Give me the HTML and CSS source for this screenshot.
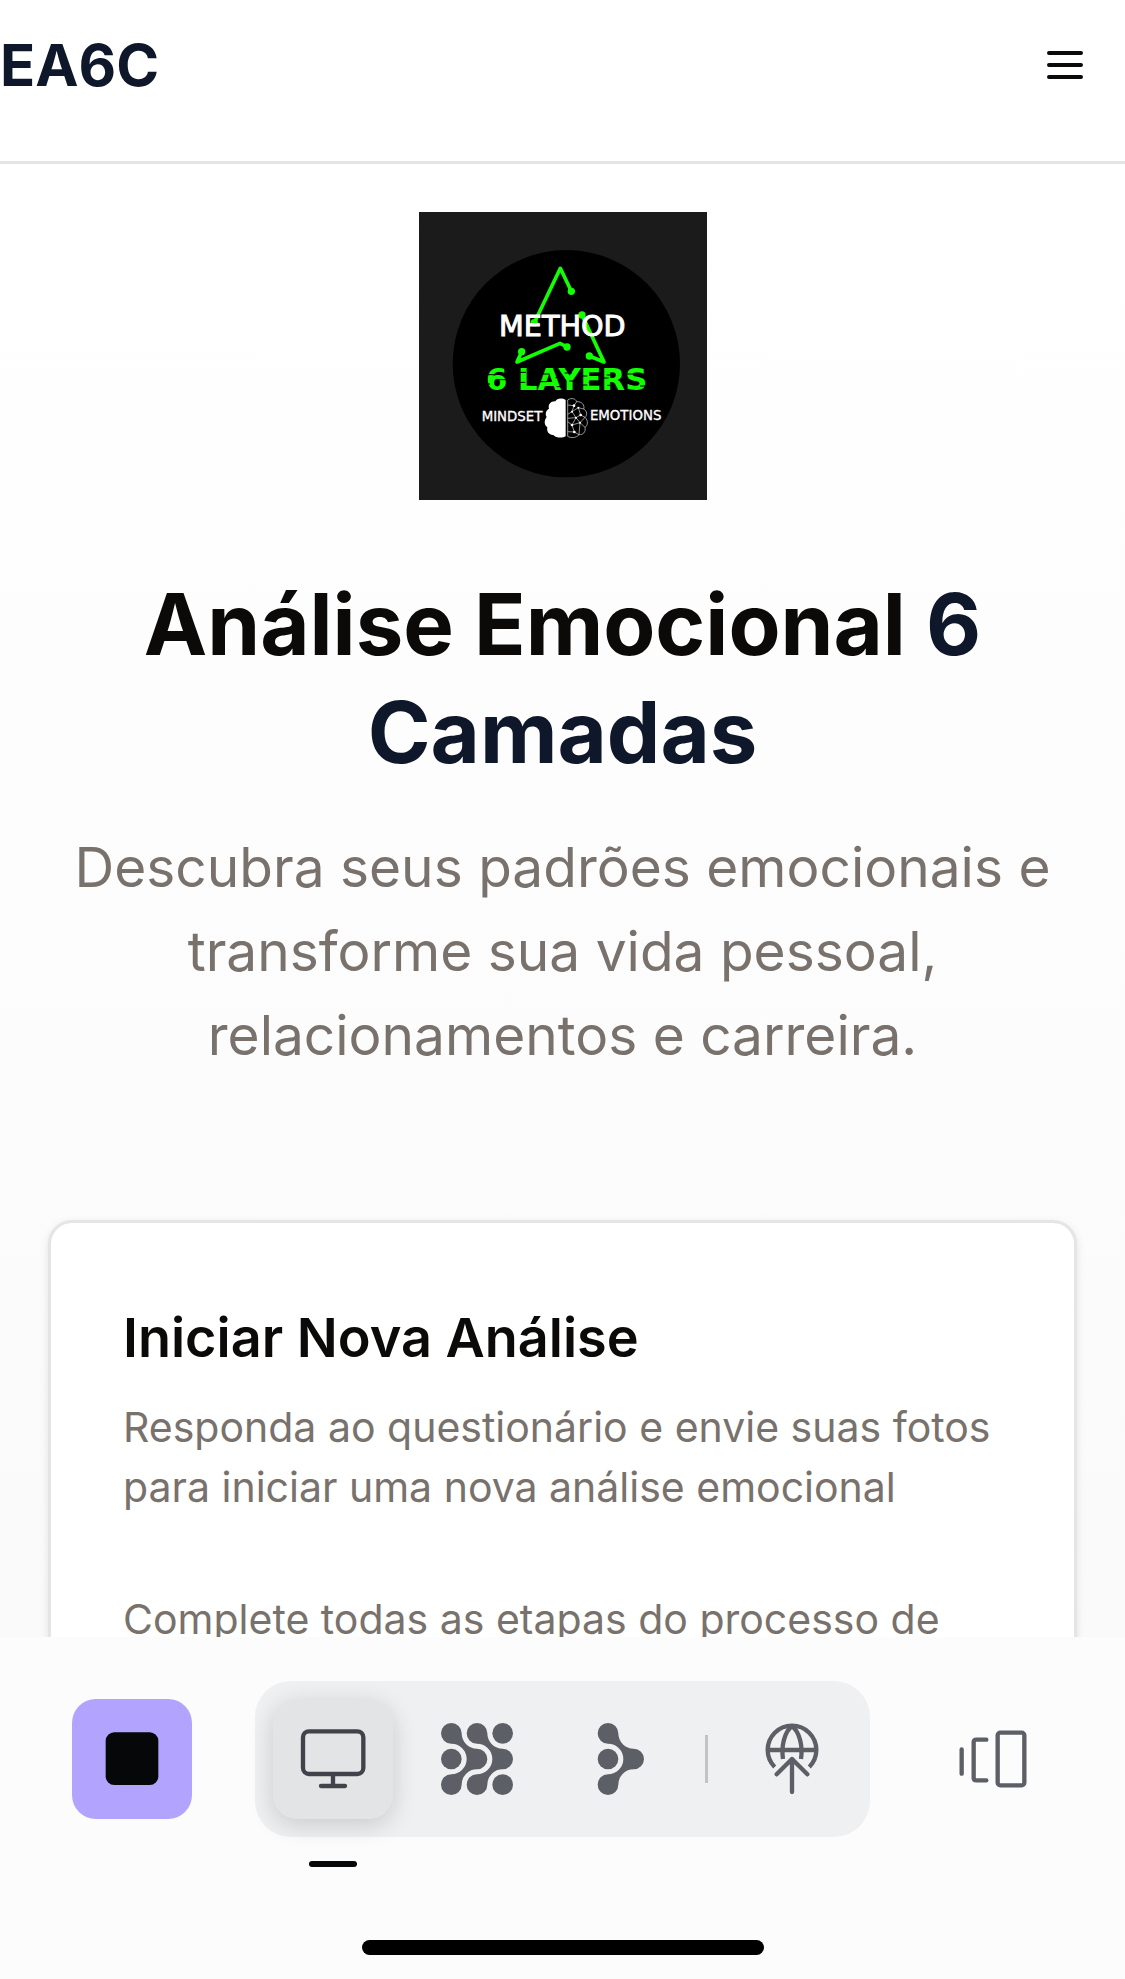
FILE: index.html
```html
<!DOCTYPE html>
<html lang="pt-BR">
<head>
<meta charset="utf-8">
<meta name="viewport" content="width=device-width, initial-scale=1">
<title>EA6C</title>
<link rel="stylesheet" href="styles.css">
</head>
<body>
<div class="page">
  <header class="header">
    <a class="brand" href="#">EA6C</a>
    <button class="menu" type="button" aria-label="Menu">
      <svg viewBox="0 0 24 24" class="menu-icon"><path d="M4 6h16M4 12h16M4 18h16"/></svg>
    </button>
  </header>
  <main class="content">
    <svg class="logo" viewBox="0 0 864 864" role="img" aria-label="Method 6 Layers">
      <rect width="864" height="864" fill="#1b1b1b"/>
      <circle cx="442" cy="455" r="341" fill="#000"/>
      <g transform="translate(-27 -21)">
        <g class="logo-lines">
          <path d="M373 353 451 190 484 259"/>
          <path d="M516 330 582 471 538 453"/>
          <path d="M335 440 321 471 450 415 471 426"/>
        </g>
        <g fill="#1f0">
          <circle cx="373" cy="353" r="11"/><circle cx="484" cy="259" r="11"/>
          <circle cx="516" cy="330" r="11"/><circle cx="538" cy="453" r="11"/>
          <circle cx="335" cy="440" r="11"/><circle cx="471" cy="426" r="11"/>
        </g>
        <text class="logo-method" x="457" y="393">METHOD</text>
        <text class="logo-layers" x="470" y="555">6 LAYERS</text>
        <path class="logo-glitch" d="M228 509h24M264 524h26M226 537h14M330 502h18M352 516h18M328 532h18M362 541h20M392 507h26M436 518h20M388 530h24M440 545h22M464 504h22M510 513h22M478 528h18M512 540h20M540 506h22M566 519h30M536 533h18M590 510h22M628 524h18M592 541h20M650 507h20M694 517h22M648 530h30M690 543h24"/>
        <text class="logo-small" x="306" y="648">MINDSET</text>
        <text class="logo-small" x="647" y="644">EMOTIONS</text>
        <path fill="#fff" d="M467 585C455 577 440 580 436 589 423 588 413 599 417 611 407 616 405 628 410 636 402 646 402 660 412 667 409 680 418 691 430 690 438 699 457 700 467 694Z"/>
        <g class="logo-net">
          <path d="M473 585C484 577 497 581 500 590 515 589 525 600 521 612 532 618 532 631 525 637 536 648 533 662 525 667 528 681 519 690 507 689 499 699 483 700 473 694Z"/>
          <path d="M473 600 492 602 500 590M492 602 486 620 473 628M486 620 505 608 521 612M505 608 512 630 525 637M486 620 498 638 512 630M498 638 486 660 473 650M498 638 510 653 525 667M486 660 510 653 507 689M486 660 493 681 507 689M493 681 473 680M473 640 498 638M510 653 525 637"/>
        </g>
        <g fill="#fff">
          <circle cx="492" cy="602" r="4"/><circle cx="486" cy="620" r="3"/><circle cx="505" cy="608" r="3"/><circle cx="512" cy="630" r="4"/><circle cx="498" cy="638" r="3"/><circle cx="486" cy="660" r="4"/><circle cx="510" cy="653" r="3"/><circle cx="493" cy="681" r="4"/>
        </g>
      </g>
    </svg>
    <h1 class="title">Análise Emocional <span class="accent">6 Camadas</span></h1>
    <p class="lead">Descubra seus padrões emocionais e transforme sua vida pessoal, relacionamentos e carreira.</p>
    <section class="card">
      <h2 class="card-title">Iniciar Nova Análise</h2>
      <p class="card-text">Responda ao questionário e envie suas fotos para iniciar uma nova análise emocional</p>
      <p class="card-text card-body">Complete todas as etapas do processo de</p>
    </section>
  </main>
  <footer class="toolbar">
    <div class="tools">
      <button class="tool stop" type="button" aria-label="Parar">
        <svg viewBox="0 0 360 360"><rect x="101" y="100" width="158" height="158" rx="26" fill="#050708"/></svg>
      </button>
      <div class="group">
        <button class="tool active" type="button" aria-label="Tela">
          <svg viewBox="0 0 360 360" class="line"><rect x="90" y="97" width="181" height="128" rx="18"/><path d="M180 231V260M144 261H216"/></svg>
        </button>
        <button class="tool" type="button" aria-label="Grade">
          <svg viewBox="0 0 360 360" class="solid">
            <path d="M134 103A46 46 0 0 0 180 149A31 31 0 0 1 180 211A46 46 0 0 0 134 257A31 31 0 1 1 103 226A46 46 0 0 0 103 134A31 31 0 1 1 134 103Z"/>
            <path d="M211 103A46 46 0 0 0 257 149A31 31 0 0 1 257 211A46 46 0 0 0 211 257A31 31 0 1 1 180 226A46 46 0 0 0 180 134A31 31 0 1 1 211 103Z"/>
            <circle cx="103" cy="180" r="31"/><circle cx="257" cy="103" r="31"/><circle cx="257" cy="257" r="31"/>
          </svg>
        </button>
        <button class="tool" type="button" aria-label="Ramo">
          <svg viewBox="0 0 360 360" class="solid">
            <path d="M172 103A46 46 0 0 0 218 149A31 31 0 0 1 218 211A46 46 0 0 0 172 257A31 31 0 1 1 141 226A46 46 0 0 0 141 134A31 31 0 1 1 172 103Z"/>
            <circle cx="141" cy="180" r="31"/>
          </svg>
        </button>
        <span class="divider"></span>
        <button class="tool" type="button" aria-label="Publicar">
          <svg viewBox="0 0 360 360" class="line">
            <path class="butt" d="M128 204A73 73 0 1 1 232 204M107 153H253M180 82C158 98 147 140 153 180M180 82C202 98 213 140 207 180"/>
            <path d="M180 180V279M134 226 180 180 226 226"/>
          </svg>
        </button>
      </div>
      <button class="tool" type="button" aria-label="Painéis">
        <svg viewBox="0 0 360 360" class="line"><path d="M86 151V224M160 122H130Q122 122 122 130V236Q122 244 130 244H160"/><rect x="194" y="101" width="80" height="158" rx="8"/></svg>
      </button>
    </div>
    <div class="home-bar"></div>
  </footer>
</div>
</body>
</html>
```

FILE: styles.css
```css
* { box-sizing: border-box; }
body { margin: 0; font-family: "Inter", "Liberation Sans", sans-serif; color: #0c0a09; background: #fff; }
h1, h2, p { margin: 0; }
button { padding: 0; border: 0; background: none; color: inherit; }
svg { display: block; }

.page { display: flex; flex-direction: column; height: 100vh; overflow: hidden; }

.header { display: flex; justify-content: space-between; align-items: flex-start; flex: none; padding: 23px 36px 54px 0; border-bottom: 3px solid #e5e5e5; background: #fff; }
.brand { font-size: 58px; line-height: 84px; font-weight: 700; color: #0f172a; text-decoration: none; }
.menu { display: flex; align-items: center; height: 84px; }
.menu-icon { width: 48px; height: 48px; fill: none; stroke: #0c0a09; stroke-width: 2; stroke-linecap: round; }

.content { flex: 1; min-height: 0; overflow: hidden; padding: 48px; background: linear-gradient(#fff, #fafafa); }
.logo { width: 288px; height: 288px; margin: 0 auto; }
.logo-lines { fill: none; stroke: #1f0; stroke-width: 11; stroke-linejoin: round; }
.logo text { font-family: "DejaVu Sans", sans-serif; text-anchor: middle; fill: #fff; }
.logo .logo-method { font-size: 86px; stroke: #fff; stroke-width: 3; }
.logo .logo-layers { font-size: 92px; font-weight: 700; fill: #1f0; }
.logo .logo-small { font-size: 40px; stroke: #fff; stroke-width: 1; }
.logo-glitch { stroke: #000; stroke-width: 3; }
.logo-net { fill: none; stroke: #ddd; stroke-width: 2; }

.title { margin-top: 71px; text-align: center; font-size: 85px; line-height: 108px; font-weight: 700; }
.accent { color: #0f172a; }
.lead { margin-top: 38px; text-align: center; font-size: 55px; line-height: 84px; color: #78716c; }

.card { margin-top: 143px; padding: 83px 72px 72px; border: 3px solid #e5e5e5; border-radius: 24px; background: #fff; box-shadow: 0 3px 9px rgba(0, 0, 0, .1); }
.card-title { font-size: 54px; line-height: 64px; font-weight: 600; }
.card-text { margin-top: 27px; font-size: 41px; line-height: 60px; color: #78716c; }
.card-body { margin-top: 72px; }

.toolbar { flex: none; padding: 44px 72px 24px; background: #fcfcfc; }
.tools { display: flex; justify-content: space-between; align-items: center; }
.tool { position: relative; width: 120px; height: 120px; border-radius: 24px; color: #5c5f66; }
.tool svg { width: 100%; height: 100%; }
.stop { background: #b2a3ff; }
.group { display: flex; align-items: center; gap: 24px; padding: 18px; border-radius: 36px; background: #eff0f2; }
.active { background: #e3e4e6; color: #40434a; box-shadow: 0 6px 24px rgba(0, 0, 0, .16); }
.active::after { content: ""; position: absolute; left: 36px; top: 162px; width: 48px; height: 6px; border-radius: 3px; background: #050708; }
.divider { width: 3px; height: 48px; background: #c2c3c4; }
.line { fill: none; stroke: currentColor; stroke-width: 13; stroke-linecap: round; stroke-linejoin: round; }
.butt { stroke-linecap: butt; }
.solid { fill: currentColor; }
.home-bar { width: 402px; max-width: 60%; height: 15px; margin: 103px auto 0; border-radius: 8px; background: #000; }
```
